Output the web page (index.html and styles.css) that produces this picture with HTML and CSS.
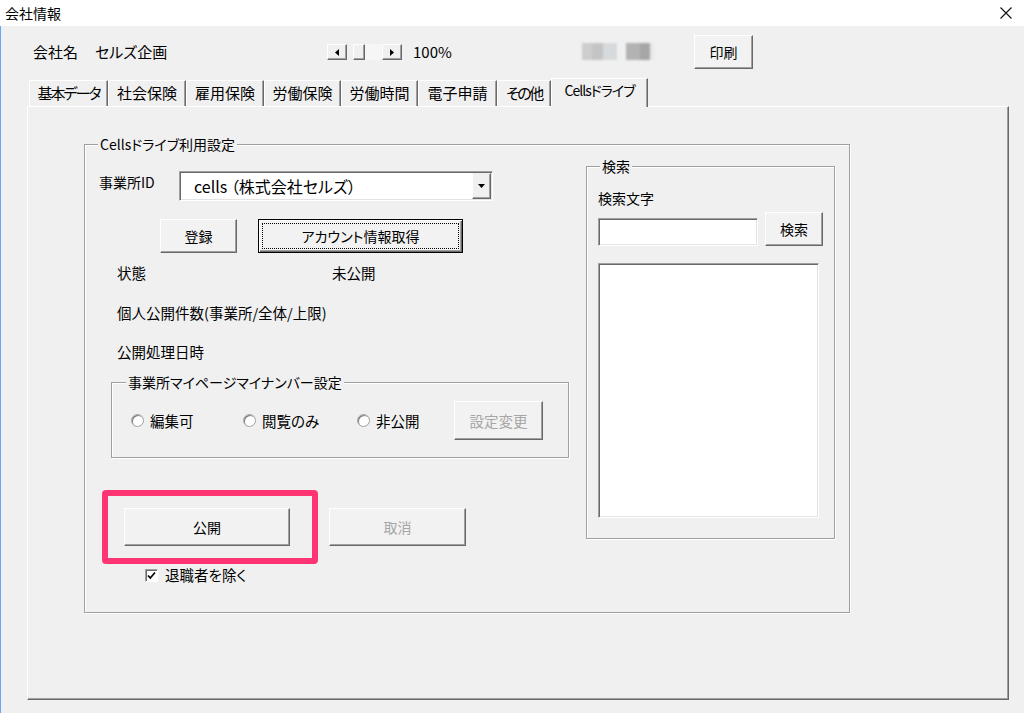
FILE: index.html
```html
<!DOCTYPE html>
<html lang="ja">
<head>
    <meta charset="utf-8">
    <title>会社情報</title>
    <link rel="stylesheet" href="styles.css">
</head>
<body>
    <div class="titlebar">
        <span class="title">会社情報</span>
        <svg class="close" width="12" height="12" viewBox="0 0 12 12">
            <path d="M0.5 0.5L11.5 11.5M11.5 0.5L0.5 11.5" stroke="#111" stroke-width="1.1" fill="none"/>
        </svg>
    </div>
    <div class="client">
        <div class="toolbar">
            <span class="company-label">会社名</span>
            <span class="company-name">セルズ企画</span>
            <div class="zoombar">
                <span class="arrow-btn">
                    <svg width="4" height="7" viewBox="0 0 4 7"><path d="M4 0L0 3.5L4 7Z" fill="#000"/></svg>
                </span>
                <span class="track-gap"></span>
                <span class="thumb"></span>
                <span class="track"></span>
                <span class="arrow-btn">
                    <svg width="4" height="7" viewBox="0 0 4 7"><path d="M0 0L4 3.5L0 7Z" fill="#000"/></svg>
                </span>
            </div>
            <span class="zoom-value">100%</span>
            <div class="blur blur-a"></div>
            <div class="blur blur-b"></div>
            <button class="btn print-btn">印刷</button>
        </div>

        <div class="tabs">
            <span class="tab tab-basic">基本データ</span>
            <span class="tab tab-w78">社会保険</span>
            <span class="tab tab-w78">雇用保険</span>
            <span class="tab tab-w77">労働保険</span>
            <span class="tab tab-w77">労働時間</span>
            <span class="tab tab-w79">電子申請</span>
            <span class="tab tab-other">その他</span>
            <span class="tab tab-active">Cellsドライブ</span>
        </div>

        <div class="panel">
            <div class="group drive-group">
                <span class="group-title">Cellsドライブ利用設定</span>
                <div class="drive-body">
                    <div class="drive-left">
                        <div class="office-row">
                            <span class="office-label">事業所ID</span>
                            <div class="combo">
                                <span class="combo-text">cells （株式会社セルズ）</span>
                                <span class="combo-btn">
                                    <svg width="7" height="4" viewBox="0 0 7 4"><path d="M0 0H7L3.5 4Z" fill="#000"/></svg>
                                </span>
                            </div>
                        </div>
                        <div class="account-row">
                            <button class="btn reg-btn">登録</button>
                            <button class="btn btn-focus account-btn">アカウント情報取得</button>
                        </div>
                        <div class="info-row status-row">
                            <span class="info-label">状態</span>
                            <span>未公開</span>
                        </div>
                        <div class="info-row count-row">個人公開件数(事業所/全体/上限)</div>
                        <div class="info-row date-row">公開処理日時</div>

                        <div class="group mynumber-group">
                            <span class="group-title">事業所マイページマイナンバー設定</span>
                            <div class="radio-row">
                                <label class="radio radio-edit"><span class="radio-dot"></span>編集可</label>
                                <label class="radio radio-view"><span class="radio-dot"></span>閲覧のみ</label>
                                <label class="radio radio-private"><span class="radio-dot"></span>非公開</label>
                                <button class="btn setting-btn" disabled>設定変更</button>
                            </div>
                        </div>

                        <div class="publish-row">
                            <button class="btn publish-btn">公開</button>
                            <button class="btn cancel-btn" disabled>取消</button>
                            <div class="highlight"></div>
                        </div>
                        <label class="check-row">
                            <span class="checkbox">
                                <svg width="11" height="11" viewBox="0 0 11 11"><path d="M2 5.5L4.3 8L9 2.5" stroke="#000" stroke-width="1.7" fill="none"/></svg>
                            </span>
                            退職者を除く
                        </label>
                    </div>

                    <div class="group search-group">
                        <span class="group-title">検索</span>
                        <div class="search-label">検索文字</div>
                        <div class="search-row">
                            <input class="field search-input" type="text">
                            <button class="btn search-btn">検索</button>
                        </div>
                        <div class="field listbox"></div>
                    </div>
                </div>
            </div>
        </div>
    </div>
</body>
</html>
```

FILE: styles.css
```css
* {
    box-sizing: border-box;
}
body {
    margin: 0;
    width: 1024px;
    height: 713px;
    overflow: hidden;
    background-color: #f0f0f0;
    font-family: "Noto Sans CJK JP", "Noto Sans", sans-serif;
    font-feature-settings: "palt";
    color: #000;
}

/* タイトルバー */
.titlebar {
    height: 26px;
    background-color: #fff;
    display: flex;
    align-items: center;
    justify-content: space-between;
    padding: 0 12px 0 5px;
    font-size: 14px;
    line-height: 18px;
}
.close {
    display: block;
}
.client {
    height: 687px;
    box-shadow: inset 1px 0 0 #62a9ee;
}

/* ボタン共通 */
.btn {
    font-family: inherit;
    font-feature-settings: "palt";
    font-size: 14px;
    line-height: 18px;
    color: #000;
    padding: 0;
    background-color: #f2f2f2;
    border: 1px solid;
    border-color: #fff #696969 #696969 #fff;
    box-shadow: inset -1px -1px 0 #a0a0a0;
    border-radius: 0;
}
.btn:disabled {
    color: #a6a6a6;
}
.btn-focus {
    border-color: #000;
    box-shadow: inset 1px 1px 0 #fff, inset -1px -1px 0 #696969, inset -2px -2px 0 #a0a0a0;
    outline: 1px dotted #000;
    outline-offset: -5px;
}
.field {
    background-color: #fff;
    border: 1px solid;
    border-color: #a0a0a0 #fff #fff #a0a0a0;
    box-shadow: inset 1px 1px 0 #696969, inset -1px -1px 0 #e3e3e3;
}

/* 上部ツールバー */
.toolbar {
    height: 52px;
    display: flex;
    align-items: center;
    padding-left: 33px;
    font-size: 15px;
    line-height: 20px;
}
.company-label {
    width: 62px;
}
.company-name {
    width: 232px;
}
.zoombar {
    display: flex;
    height: 16px;
}
.arrow-btn,
.thumb {
    display: flex;
    align-items: center;
    justify-content: center;
    background-color: #f0f0f0;
    border: 1px solid;
    border-color: #fff #696969 #696969 #fff;
    box-shadow: inset -1px -1px 0 #a0a0a0;
}
.arrow-btn {
    width: 20px;
}
.arrow-btn svg {
    display: block;
}
.track-gap {
    width: 6px;
}
.thumb {
    width: 12px;
}
.track {
    width: 17px;
    background-color: #f6f6f6;
}
.zoom-value {
    width: 169px;
    margin-left: 11px;
}
.blur {
    height: 17px;
    margin-top: -2px;
    filter: blur(1.2px);
}
.blur-a {
    width: 35px;
    background: linear-gradient(90deg, #cdcdcd 0 30%, #c4c4c4 30% 60%, #d6dadd 60% 100%);
}
.blur-b {
    width: 28px;
    margin-left: 9px;
    background: linear-gradient(90deg, #b3b3b3 0 50%, #a6a6a6 50% 85%, #e8e8e8 85% 100%);
}
.print-btn {
    width: 59px;
    height: 34px;
    margin-left: 40px;
}

/* タブ */
.tabs {
    height: 28px;
    display: flex;
    align-items: flex-end;
    padding-left: 29px;
    font-size: 15px;
}
.tab {
    height: 26px;
    line-height: 24px;
    text-align: center;
    border-top: 1px solid #fff;
    border-left: 1px solid #fff;
    border-right: 1px solid #696969;
    box-shadow: inset -1px 0 0 #a0a0a0;
    white-space: nowrap;
}
.tab-basic {
    width: 79px;
    letter-spacing: -2px;
}
.tab-w77 {
    width: 77px;
}
.tab-w78 {
    width: 78px;
}
.tab-w79 {
    width: 79px;
}
.tab-other {
    width: 54px;
    letter-spacing: -2.5px;
}
.tab-active {
    width: 97px;
    height: 29px;
    margin-bottom: -1px;
    position: relative;
    z-index: 1;
    background-color: #f0f0f0;
    line-height: 23px;
    font-size: 14px;
    letter-spacing: -1px;
}
.panel {
    width: 982px;
    height: 594px;
    margin-left: 27px;
    border-top: 1px solid #fff;
    border-left: 1px solid #fff;
    border-right: 1px solid #696969;
    border-bottom: 1px solid #696969;
    box-shadow: inset -1px -1px 0 #a0a0a0;
    font-size: 14px;
    line-height: 18px;
}

/* グループ枠 */
.group {
    border: 1px solid #a0a0a0;
    box-shadow: inset 1px 1px 0 #fff, 1px 1px 0 #fff;
}
.group-title {
    display: block;
    width: max-content;
    height: 16px;
    padding: 0 2px;
    margin: -9px 0 -7px 13px;
    background-color: #f0f0f0;
    font-size: 14px;
    line-height: 16px;
}
.drive-group {
    width: 766px;
    height: 469px;
    margin: 37px 0 0 56px;
}
.drive-body {
    display: flex;
    align-items: flex-start;
    padding-left: 14px;
}
.drive-left {
    width: 487px;
}
.office-row {
    display: flex;
    align-items: flex-start;
    margin-top: 26px;
}
.office-label {
    width: 80px;
    margin-top: 2px;
}
.combo {
    width: 314px;
    height: 30px;
    display: flex;
    align-items: stretch;
    background-color: #fff;
    border: 1px solid;
    border-color: #a0a0a0 #fff #fff #a0a0a0;
    box-shadow: inset 1px 1px 0 #696969, inset -1px -1px 0 #e3e3e3;
    padding: 1px 1px 1px 2px;
}
.combo-text {
    flex: 1;
    padding-left: 12px;
    font-size: 16px;
    line-height: 26px;
}
.combo-btn {
    width: 19px;
    display: flex;
    align-items: center;
    justify-content: center;
    background-color: #f0f0f0;
    border: 1px solid;
    border-color: #f0f0f0 #696969 #696969 #fff;
    box-shadow: inset -1px -1px 0 #a0a0a0;
}
.combo-btn svg {
    display: block;
}
.account-row {
    display: flex;
    gap: 21px;
    margin-top: 18px;
    padding-left: 61px;
}
.reg-btn {
    width: 77px;
    height: 34px;
}
.account-btn {
    width: 205px;
    height: 34px;
}
.info-row {
    padding-left: 18px;
    font-size: 14.5px;
}
.status-row {
    display: flex;
    margin-top: 11px;
}
.info-label {
    width: 215px;
}
.count-row {
    margin-top: 22px;
}
.date-row {
    margin-top: 21px;
}
.mynumber-group {
    width: 458px;
    height: 76px;
    margin: 21px 0 0 12px;
}
.mynumber-group .group-title {
    margin-left: 14px;
}
.radio-row {
    display: flex;
    align-items: center;
    margin-top: 18px;
    padding-left: 19px;
    font-size: 14.5px;
}
.radio {
    display: flex;
    align-items: center;
    gap: 6px;
}
.radio-edit {
    width: 112px;
}
.radio-view {
    width: 114px;
}
.radio-private {
    width: 97px;
}
.radio-dot {
    width: 13px;
    height: 13px;
    border-radius: 50%;
    background-color: #fff;
    border: 1px solid #a0a0a0;
    box-shadow: inset 1px 1px 0 #7a7a7a;
}
.setting-btn {
    width: 89px;
    height: 39px;
    font-size: 14.5px;
}
.publish-row {
    position: relative;
    display: flex;
    gap: 39px;
    margin-top: 50px;
    padding-left: 25px;
}
.publish-btn {
    width: 166px;
    height: 38px;
}
.cancel-btn {
    width: 137px;
    height: 38px;
}
/* 強調枠（注釈） */
.highlight {
    position: absolute;
    left: 3px;
    top: -18px;
    width: 216px;
    height: 74px;
    border: 6px solid #fe3572;
    border-radius: 4px;
    pointer-events: none;
}
.check-row {
    display: flex;
    align-items: center;
    gap: 7px;
    margin-top: 20px;
    padding-left: 46px;
    font-size: 14.5px;
}
.checkbox {
    width: 13px;
    height: 13px;
    display: flex;
    align-items: center;
    justify-content: center;
    background-color: #fff;
    border: 1px solid;
    border-color: #a0a0a0 #fff #fff #a0a0a0;
    box-shadow: inset 1px 1px 0 #696969;
}
.checkbox svg {
    display: block;
}

/* 検索 */
.search-group {
    width: 249px;
    height: 373px;
    margin-top: 21px;
}
.search-label {
    margin-top: 22px;
    padding-left: 11px;
}
.search-row {
    display: flex;
    align-items: flex-end;
    gap: 7px;
    margin-top: 5px;
    padding-left: 11px;
}
.search-input {
    width: 160px;
    height: 28px;
    margin: 0;
    padding: 0;
}
.search-btn {
    width: 58px;
    height: 34px;
}
.listbox {
    width: 221px;
    height: 255px;
    margin: 17px 0 0 11px;
}
```
